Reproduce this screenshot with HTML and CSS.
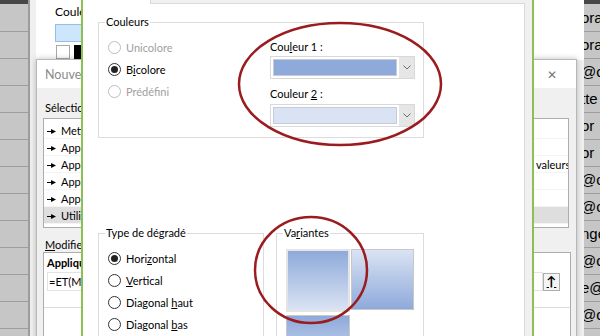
FILE: index.html
```html
<!DOCTYPE html>
<html lang="fr">
<head>
  <meta charset="UTF-8">
  <title>Effets de remplissage</title>
  <link rel="stylesheet" href="styles.css">
</head>
<body>
<div class="screen">

  <!-- feuille Excel derriere -->
  <div class="sheet sheet-left">
    <div class="cell"></div><div class="cell"></div><div class="cell"></div><div class="cell"></div>
    <div class="cell"></div><div class="cell"></div><div class="cell"></div><div class="cell"></div>
    <div class="cell"></div><div class="cell"></div><div class="cell"></div><div class="cell"></div>
    <div class="cell"></div>
  </div>
  <div class="sheet sheet-right">
    <div class="cell">ora</div><div class="cell">ora</div><div class="cell">@or</div><div class="cell">tte</div>
    <div class="cell">or</div><div class="cell">or</div><div class="cell">@c</div><div class="cell">@c</div>
    <div class="cell">nge</div><div class="cell">@o</div><div class="cell">e@</div><div class="cell">@or</div>
    <div class="cell"></div>
  </div>

  <!-- Format de cellule -->
  <div class="win fmt">
    <div class="fmt-top">
      <div class="fmt-label">Couleur d'arrière-plan :</div>
      <div class="fmt-swatch"></div>
      <div class="fmt-palette"><span class="chip chip-white"></span><span class="chip chip-black"></span></div>
    </div>
  </div>

  <!-- Nouvelle regle de mise en forme -->
  <div class="win rule">
    <div class="rule-title">
      <span>Nouvelle règle de mise en forme</span>
      <span class="close">&#x2715;</span>
    </div>
    <div class="rule-body">
      <div class="rule-label">Sélectionnez un type de règle :</div>
      <ul class="rule-list">
        <li><i class="arr"></i>Mettre en forme toutes les cellules d'après leur valeur</li>
        <li><i class="arr"></i>Appliquer une mise en forme uniquement aux cellules qui contiennent</li>
        <li><i class="arr"></i>Appliquer une mise en forme uniquement aux valeurs rangées parmi les premières ou les dernières valeurs</li>
        <li><i class="arr"></i>Appliquer une mise en forme uniquement aux valeurs au-dessus ou en dessous de la moyenne</li>
        <li><i class="arr"></i>Appliquer une mise en forme uniquement aux valeurs uniques ou aux doublons</li>
        <li class="sel"><i class="arr"></i>Utiliser une formule pour déterminer pour quelles cellules le format sera appliqué</li>
      </ul>
      <div class="rule-label"><u>M</u>odifiez la description de la règle :</div>
      <div class="rule-desc">
        <div class="desc-title">Appliquer une mise en forme aux valeurs pour lesquelles cette formule est vraie :</div>
        <div class="formula-row">
          <div class="formula">=ET(MOD(LIGNE();2)=0;$A5&lt;&gt;"")</div>
          <div class="ref-btn">&#x2191;</div>
        </div>
        <div class="desc-sep"></div>
      </div>
    </div>
  </div>

  <!-- Effets de remplissage -->
  <div class="win fill">
    <div class="tabstrip"><span class="tab-on"></span><span class="tab-rest"></span></div>
    <div class="page">

      <div class="grp grp-colors">
        <span class="grp-title">Couleurs</span>
        <div class="radios">
          <div class="radio off"><span class="dot"></span><span>Unicolore</span></div>
          <div class="radio on"><span class="dot"></span><span>B<u>i</u>colore</span></div>
          <div class="radio off"><span class="dot"></span><span>Prédéfini</span></div>
        </div>
        <div class="colors">
          <div class="clabel">Cou<u>l</u>eur 1 :</div>
          <div class="combo">
            <span class="swatch swatch-1"></span>
            <span class="drop"><svg width="8" height="5" viewBox="0 0 8 5"><polyline points="0.5,0.5 4,4 7.5,0.5" fill="none" stroke="#6d6d6d" stroke-width="1"/></svg></span>
          </div>
          <div class="clabel clabel-2">Couleur <u>2</u> :</div>
          <div class="combo">
            <span class="swatch swatch-2"></span>
            <span class="drop"><svg width="8" height="5" viewBox="0 0 8 5"><polyline points="0.5,0.5 4,4 7.5,0.5" fill="none" stroke="#6d6d6d" stroke-width="1"/></svg></span>
          </div>
        </div>
      </div>

      <div class="lower">
        <div class="grp grp-type">
          <span class="grp-title">Type de dégradé</span>
          <div class="radio on"><span class="dot"></span><span>Hori<u>z</u>ontal</span></div>
          <div class="radio"><span class="dot"></span><span><u>V</u>ertical</span></div>
          <div class="radio"><span class="dot"></span><span>Diagonal <u>h</u>aut</span></div>
          <div class="radio"><span class="dot"></span><span>Diagonal <u>b</u>as</span></div>
        </div>
        <div class="grp grp-var">
          <span class="grp-title">Va<u>r</u>iantes</span>
          <div class="variants">
            <span class="variant v-down picked"></span>
            <span class="variant v-up"></span>
            <span class="variant v-down"></span>
          </div>
        </div>
      </div>

    </div>
  </div>

  <!-- annotations -->
  <svg class="marks" width="600" height="336" viewBox="0 0 600 336">
    <ellipse cx="340" cy="84" rx="101" ry="61" fill="none" stroke="#9b1c1f" stroke-width="2.5"/>
    <ellipse cx="311" cy="270" rx="56" ry="53" fill="none" stroke="#9b1c1f" stroke-width="2.5"/>
  </svg>

</div>
</body>
</html>
```

FILE: styles.css
```css
body { margin: 0; font-family: Lato, "Noto Sans", sans-serif; font-size: 11px; color: #000; }
u { text-decoration: underline; text-underline-offset: 1px; }

.screen { position: relative; width: 600px; height: 336px; overflow: hidden; background: #c6c6c6; }

/* feuille */
.sheet { position: absolute; top: 0; height: 336px; background: #c6c6c6; border-top: 4px solid #474747; padding-top: 1px; }
.sheet-left { left: 0; width: 28px; }
.sheet-right { left: 582px; width: 16px; border-left: 2px solid #8e8e8e; overflow: hidden; }
.cell { height: 26px; border-bottom: 1px solid #9d9d9d; font-family: "Liberation Sans", sans-serif; font-size: 15px; line-height: 26px; white-space: nowrap; text-indent: -3px; }

.win { position: absolute; box-sizing: border-box; }

/* Format de cellule */
.fmt { left: 28px; top: 0; width: 556px; height: 336px; background: #f0f0f0; border-left: 2px solid #9c9c9c; padding-left: 6px; }
.fmt-top { background: #fff; height: 60px; padding: 5px 0 0 19px; box-sizing: border-box; }
.fmt-label { font-size: 12px; line-height: 14px; }
.fmt-swatch { margin-top: 5px; width: 120px; height: 18px; background: #cde6fb; border: 1px solid #96bfe6; box-sizing: border-box; }
.fmt-palette { display: flex; gap: 4px; margin-top: 3px; padding-left: 1px; }
.chip { width: 14px; height: 14px; box-sizing: border-box; border: 1px solid #a9a9a9; }
.chip-white { background: #fff; }
.chip-black { background: #000; border-color: #000; }

/* Nouvelle regle */
.rule { left: 36px; top: 59px; width: 541px; height: 290px; background: #f0f0f0; border: 1px solid #b8b8b8; box-shadow: 0 0 6px rgba(0,0,0,0.25); }
.rule-title { height: 28px; background: #fff; display: flex; align-items: center; justify-content: space-between; padding: 0 19px 0 8px; color: #8a8a8a; font-size: 12.5px; }
.close { font-size: 12px; color: #777; }
.rule-body { padding: 12px 6px 0 6px; }
.rule-label { padding-left: 2px; line-height: 16px; }
.rule-list { list-style: none; margin: 2px 0 0; padding: 3px 0 3px; background: #fff; border: 1px solid #adadad; width: 526px; box-sizing: border-box; overflow: hidden; }
.rule-list li { height: 17px; line-height: 17px; white-space: nowrap; padding-left: 3px; border-bottom: 1px solid #f4f4f4; box-sizing: border-box; }
.rule-list li.sel { background: #dedede; }
.arr { display: inline-block; width: 9px; height: 5px; margin-right: 5px; vertical-align: 1px; background: #000; clip-path: polygon(0 40%, 45% 40%, 45% 0, 100% 50%, 45% 100%, 45% 60%, 0 60%); }
.rule-body .rule-label + .rule-desc { margin-top: -1px; }
.rule-list + .rule-label { margin-top: 9px; }
.rule-desc { background: #fff; border: 1px solid #adadad; width: 528px; height: 100px; box-sizing: border-box; padding: 3px 10px 0 3px; }
.desc-title { font-weight: bold; line-height: 14px; }
.formula-row { display: flex; align-items: center; margin-top: 2px; }
.formula { flex: 1; height: 19px; line-height: 18px; border: 1px solid #e3e3e3; box-sizing: border-box; padding-left: 1px; white-space: nowrap; overflow: hidden; }
.ref-btn { width: 17px; height: 18px; border: 1px solid #adadad; box-sizing: border-box; background: #f4f4f4; text-align: center; font-weight: bold; font-size: 13px; line-height: 15px; text-decoration: underline; }
.desc-sep { margin: 16px -10px 0 -3px; border-top: 1px solid #dcdcdc; }

/* Effets de remplissage */
.fill { left: 81px; top: 0; width: 453px; height: 336px; background: #f0f0f0; border-left: 2px solid #8cc152; border-right: 2px solid #8cc152; }
.tabstrip { display: flex; height: 4px; margin-right: 7px; }
.tab-on { width: 67px; background: #fff; }
.tab-rest { flex: 1; background: #f0f0f0; border-left: 1px solid #d9d9d9; border-bottom: 1px solid #d9d9d9; }
.page { background: #fff; margin-right: 7px; border-right: 1px solid #d9d9d9; height: 332px; padding: 18px 0 0 15px; box-sizing: border-box; }

.grp { position: relative; border: 1px solid #dcdcdc; box-sizing: border-box; }
.grp-title { position: absolute; top: -8px; left: 6px; background: #fff; padding: 0 1px; line-height: 14px; }
.grp-colors { width: 326px; height: 116px; display: grid; grid-template-columns: 162px 1fr; padding-left: 9px; }
.radios { padding-top: 13px; }
.radio { display: flex; align-items: center; gap: 5px; height: 22px; }
.dot { flex: none; width: 13px; height: 13px; border-radius: 50%; border: 1px solid #333; box-sizing: border-box; background: #fff; display: flex; align-items: center; justify-content: center; }
.radio.on .dot::after { content: ""; width: 7px; height: 7px; border-radius: 50%; background: #222; }
.radio.off { color: #a0a0a0; }
.radio.off .dot { border-color: #bdbdbd; }

.colors { padding-top: 17px; }
.clabel { line-height: 14px; margin-bottom: 2px; }
.clabel-2 { margin-bottom: 3px; }
.combo { display: flex; width: 145px; height: 23px; border: 1px solid #d9d9d9; box-sizing: border-box; background: #fff; margin-bottom: 8px; }
.swatch { width: 122px; margin: 2px; border: 1px solid #c5ccd8; }
.swatch-1 { background: #8eaadb; }
.swatch-2 { background: #dae3f3; }
.drop { flex: 1; background: #e6e6e6; display: flex; align-items: center; justify-content: center; }

.lower { display: flex; gap: 12px; margin-top: 95px; }
.grp-type { width: 166px; height: 120px; padding: 13px 0 0 9px; }
.grp-var { width: 148px; height: 120px; padding: 15px 0 0 9px; }
.variants { display: grid; grid-template-columns: 64px 63px; gap: 3px 1px; align-items: start; }
.variant { height: 61px; border: 1px solid #c8c8c8; box-sizing: border-box; }
.variant.picked { height: 63px; border: 2px solid #e4e4e4; }
.v-down { background: linear-gradient(#8eaadb, #dae3f3); }
.v-up { background: linear-gradient(#dae3f3, #8eaadb); }

.marks { position: absolute; left: 0; top: 0; pointer-events: none; }
```
